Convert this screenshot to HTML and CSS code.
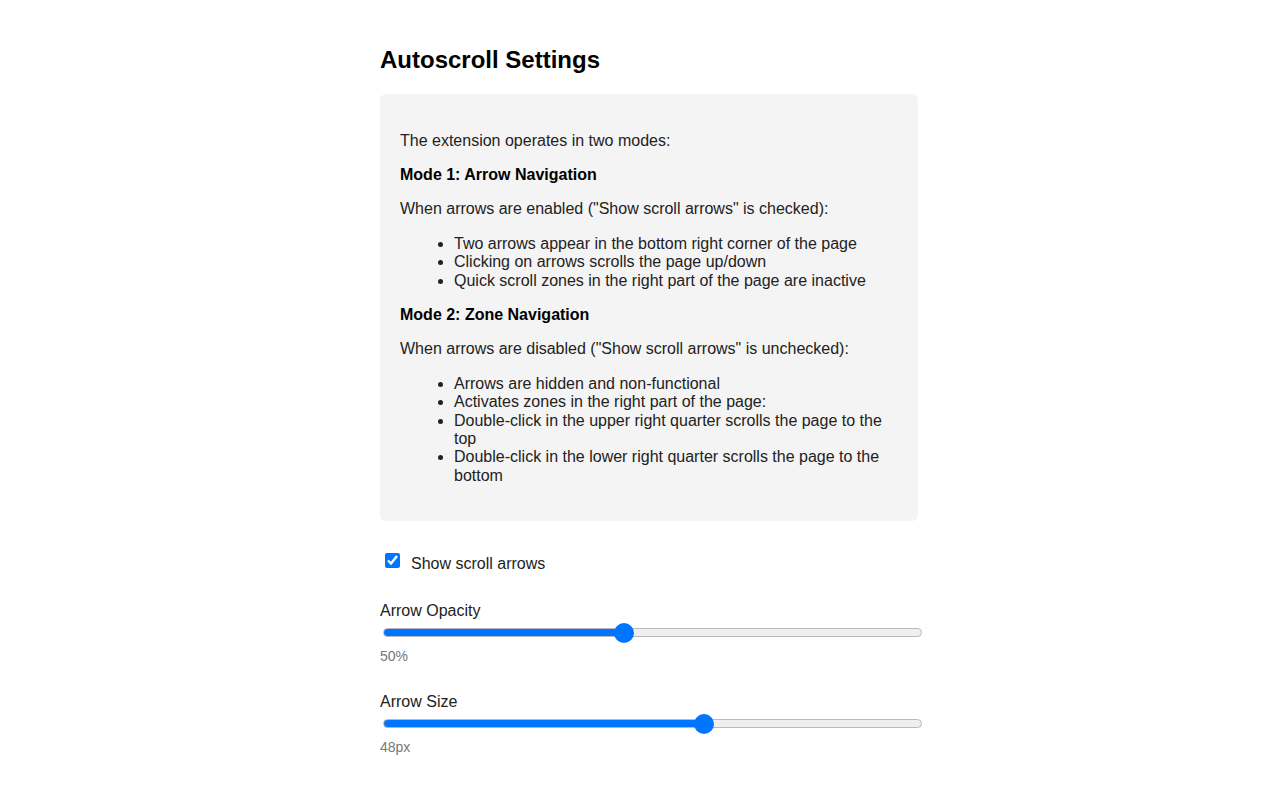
FILE: index.html
```html
<!DOCTYPE html>
<html lang="en">
<head>
<meta charset="utf-8">
<title>Autoscroll Settings</title>
<link rel="stylesheet" href="styles.css">
</head>
<body>
<div class="page">
  <h2 class="title">Autoscroll Settings</h2>
  <div class="info">
    <p>The extension operates in two modes:</p>
    <p class="mode">Mode 1: Arrow Navigation</p>
    <p>When arrows are enabled ("Show scroll arrows" is checked):</p>
    <ul>
      <li>Two arrows appear in the bottom right corner of the page</li>
      <li>Clicking on arrows scrolls the page up/down</li>
      <li>Quick scroll zones in the right part of the page are inactive</li>
    </ul>
    <p class="mode">Mode 2: Zone Navigation</p>
    <p>When arrows are disabled ("Show scroll arrows" is unchecked):</p>
    <ul>
      <li>Arrows are hidden and non-functional</li>
      <li>Activates zones in the right part of the page:</li>
      <li>Double-click in the upper right quarter scrolls the page to the top</li>
      <li>Double-click in the lower right quarter scrolls the page to the bottom</li>
    </ul>
  </div>

  <label class="check-row">
    <input type="checkbox" class="check" checked>
    <span>Show scroll arrows</span>
  </label>

  <div class="setting">
    <div class="setting-label">Arrow Opacity</div>
    <input type="range" class="slider" min="10" max="100" value="50" style="--f: 0.4444">
    <div class="setting-value">50%</div>
  </div>

  <div class="setting">
    <div class="setting-label">Arrow Size</div>
    <input type="range" class="slider" min="24" max="64" value="48" style="--f: 0.6">
    <div class="setting-value">48px</div>
  </div>
</div>
</body>
</html>
```

FILE: styles.css
```css
html, body {
  margin: 0;
  padding: 0;
  background: #ffffff;
}

body {
  font-family: "Liberation Sans", Arial, sans-serif;
  font-size: 16px;
  line-height: 1.15;
  color: #222222;
}

.page {
  width: 540px;
  margin: 0 auto;
  padding: 46px 0 40px 20px;
  box-sizing: content-box;
}

.title {
  margin: 0 0 20px;
  font-size: 24px;
  font-weight: bold;
  color: #000000;
  line-height: 1.15;
}

.info {
  background: #f4f4f4;
  border-radius: 6px;
  padding: 22px 20px 20px;
  margin-right: 2px;
}

.info p {
  margin: 16px 0;
}

.info .mode {
  font-weight: bold;
  color: #000000;
}

.info ul {
  margin: 16px 0;
  padding-left: 54px;
}

.check-row {
  display: flex;
  align-items: center;
  margin-top: 34px;
  height: 18px;
}

.check {
  width: 15px;
  height: 15px;
  margin: -8px 11px 0 5px;
  accent-color: #0075ff;
}

.setting {
  margin-top: 29px;
}

.setting-label {
  line-height: 18px;
}

.slider {
  -webkit-appearance: none;
  appearance: none;
  display: block;
  width: 539px;
  height: 9px;
  margin: 8px 0 11px 3px;
  padding: 0;
  border: 1px solid #b9b9b9;
  border-radius: 5px;
  box-sizing: border-box;
  background-color: #efefef;
  background-image: linear-gradient(#0075ff, #0075ff);
  background-repeat: no-repeat;
  background-origin: border-box;
  background-clip: border-box;
  background-size: calc(10px + (100% - 20px) * var(--f)) 100%;
  outline: none;
}

.slider::-webkit-slider-thumb {
  -webkit-appearance: none;
  appearance: none;
  width: 20px;
  height: 20px;
  border-radius: 50%;
  background: #0075ff;
  border: none;
  cursor: pointer;
}

.setting-value {
  font-size: 14px;
  line-height: 16px;
  color: #777777;
}
```
